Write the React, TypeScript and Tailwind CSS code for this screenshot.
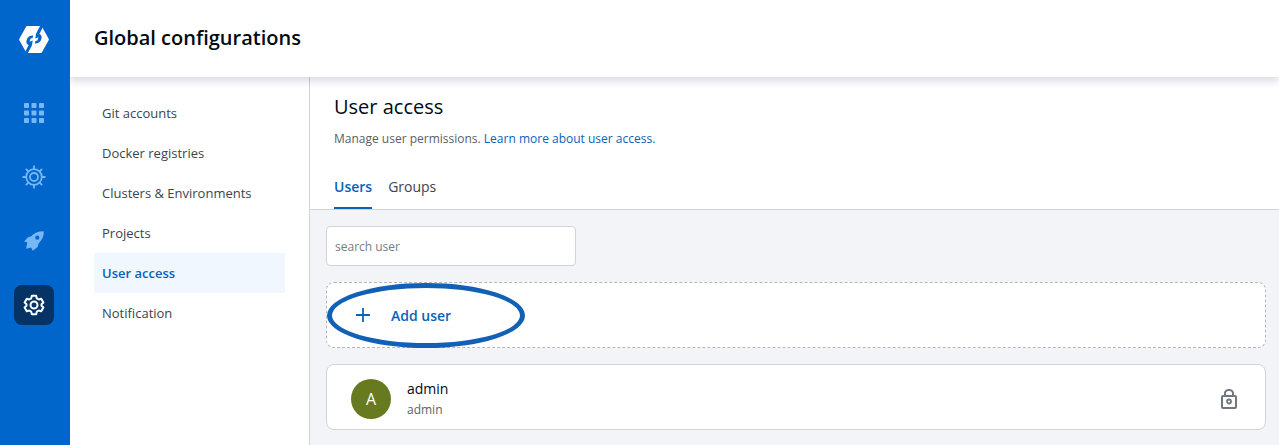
import React from "react";

const navItems = ["Git accounts", "Docker registries", "Clusters & Environments", "Projects", "User access", "Notification"];

function Logo() {
  const cavity = "M22.6 0L18 8.8L17.3 13.6L20.4 12.2L19.4 15.6L17.4 16L16.8 18.4C20.6 19 22.8 16.6 23.4 13.8C24 11.4 23.4 9.8 21.4 9L25 1.8Z";
  return (
    <svg width="32" height="29" viewBox="0 0 32 29" strokeLinejoin="round">
      <path d="M9 2H23L30 14.5L23 27H9L2 14.5Z" fill="#fff" stroke="#fff" strokeWidth="1.8" />
      <path d={cavity} fill="#0066cc" />
      <path d={cavity} fill="#0066cc" transform="rotate(180 16 14.5)" />
    </svg>
  );
}

function AppsIcon() {
  return (
    <svg width="20" height="20" viewBox="0 0 20 20" fill="#77b7f6">
      {[0, 7.5, 15].map((y) => [0, 7.5, 15].map((x) => <rect key={`${x}-${y}`} x={x} y={y} width="5" height="5" rx=".7" />))}
    </svg>
  );
}

function HelmIcon() {
  return (
    <svg width="24" height="24" viewBox="0 0 24 24" fill="none" stroke="#77b7f6" strokeWidth="1.8" strokeLinecap="round">
      <circle cx="12" cy="12" r="7.8" />
      <circle cx="12" cy="12" r="4" />
      {[0, 45, 90, 135, 180, 225, 270, 315].map((a) => <path key={a} d="M12 4V1.2" transform={`rotate(${a} 12 12)`} />)}
    </svg>
  );
}

function RocketIcon() {
  return (
    <svg width="24" height="24" viewBox="0 0 24 24" fill="#77b7f6">
      <path fillRule="evenodd" d="M21.7 2.3C16.6 2.2 12.4 3.7 9.3 7.2L6 8.2L2.2 12.4L5.4 13.4L4.1 19.8L9.2 18.4L10.7 21.7L15.6 18L16.6 14.4C20 11.1 22.1 7.2 21.7 2.3ZM15.3 6.6A2.1 2.1 0 1 1 15.3 10.8A2.1 2.1 0 1 1 15.3 6.6Z" />
    </svg>
  );
}

function GearIcon() {
  return (
    <svg width="24" height="24" viewBox="0 0 24 24" fill="none" stroke="#fff" strokeWidth="2" strokeLinejoin="round">
      <circle cx="12" cy="12" r="3.5" />
      <path d="M9.8 2.7H14.2L14.8 5.4L16.7 6.5L19.2 5.7L21.4 9.5L19.5 11.2V12.8L21.4 14.5L19.2 18.3L16.7 17.5L14.8 18.6L14.2 21.3H9.8L9.2 18.6L7.3 17.5L4.8 18.3L2.6 14.5L4.5 12.8V11.2L2.6 9.5L4.8 5.7L7.3 6.5L9.2 5.4Z" />
    </svg>
  );
}

function RailButton({ children, active = false }: { children: React.ReactNode; active?: boolean }) {
  return <button className={active ? "flex size-10 items-center justify-center rounded-lg bg-[#053365]" : "flex size-10 items-center justify-center"}>{children}</button>;
}

export default function App() {
  return (
    <div className="flex h-[445px] w-full overflow-hidden bg-white font-['Open_Sans','Noto_Sans',sans-serif] text-[#000a14]">
      <aside className="z-20 flex w-[70px] shrink-0 flex-col items-center gap-6 bg-[#0066cc] pr-[2px]">
        <div className="flex h-[69px] items-end pb-[15px]"><Logo /></div>
        <RailButton><AppsIcon /></RailButton>
        <RailButton><HelmIcon /></RailButton>
        <RailButton><RocketIcon /></RailButton>
        <RailButton active><GearIcon /></RailButton>
      </aside>
      <div className="flex min-w-0 flex-1 flex-col">
        <header className="z-10 flex h-[77px] shrink-0 items-center bg-white pb-px pl-6 shadow-[0_4px_8px_rgba(21,21,80,0.16)]">
          <h1 className="text-[20px] leading-7 font-semibold">Global configurations</h1>
        </header>
        <div className="flex min-h-0 flex-1">
          <nav className="flex w-60 shrink-0 flex-col border-r border-[#d0d4d9] pt-4 pr-6 pl-6">
            {navItems.map((item) => (
              <a key={item} className={item === "User access" ? "flex h-10 items-center rounded-xs bg-[#f0f7ff] pt-0.5 pl-2 text-[13px] font-semibold text-[#0b62b8]" : "flex h-10 items-center pt-0.5 pl-2 text-[13px] text-[#3b444c]"}>{item}</a>
            ))}
          </nav>
          <main className="flex min-w-0 flex-1 flex-col">
            <section className="h-[133px] shrink-0 border-b border-[#d0d4d9] px-6 pt-4">
              <h2 className="text-[20px] leading-7">User access</h2>
              <p className="mt-2 text-[12px] leading-5 text-[#596168]">Manage user permissions. <a className="text-[#0b62b8]">Learn more about user access.</a></p>
              <div className="mt-[15px] flex h-[45px] gap-4 text-[14px]">
                <button className="border-b-2 border-[#0b62b8] pt-0.5 font-semibold text-[#0b62b8]">Users</button>
                <button className="border-b-2 border-transparent pt-0.5 text-[#3b444c]">Groups</button>
              </div>
            </section>
            <section className="flex flex-1 flex-col gap-4 bg-[#f2f4f7] py-4 pr-[13px] pl-4">
              <input placeholder="search user" className="h-10 w-[250px] rounded border border-[#d0d4d9] bg-white px-2 text-[12px] outline-none placeholder:text-[#767d84]" />
              <div className="relative flex h-[66px] shrink-0 items-center rounded-lg border border-dashed border-[#b1b7bc] bg-white pl-[29px] text-[#0b62b8]">
                <svg width="14" height="14" viewBox="0 0 14 14" fill="none" stroke="currentColor" strokeWidth="1.8"><path d="M7 0V14M0 7H14" /></svg>
                <span className="ml-[21px] text-[14px] font-semibold">Add user</span>
                <div className="absolute top-0 left-0 h-[65px] w-[198px] rounded-[50%] border-[5px] border-[#1260b5]" />
              </div>
              <div className="flex h-[66px] shrink-0 items-center rounded-lg border border-[#d0d4d9] bg-white pr-7 pl-6">
                <div className="mt-1 flex size-10 items-center justify-center rounded-full bg-[#687a20] text-[16px] text-white">A</div>
                <div className="mt-[5px] ml-4 flex-1">
                  <div className="text-[14px] leading-5">admin</div>
                  <div className="text-[12px] leading-[21px] text-[#596168]">admin</div>
                </div>
                <svg className="mt-1" width="16" height="20" viewBox="0 0 16 20" fill="none" stroke="#70777e" strokeWidth="2"><rect x="1" y="7" width="14" height="12" rx="1" /><path d="M4 7V5A3.5 3.5 0 0 1 7.5 1H8.5A3.5 3.5 0 0 1 12 5V7" /><circle cx="8" cy="12.5" r="2" strokeWidth="1.8" /></svg>
              </div>
            </section>
          </main>
        </div>
      </div>
    </div>
  );
}
